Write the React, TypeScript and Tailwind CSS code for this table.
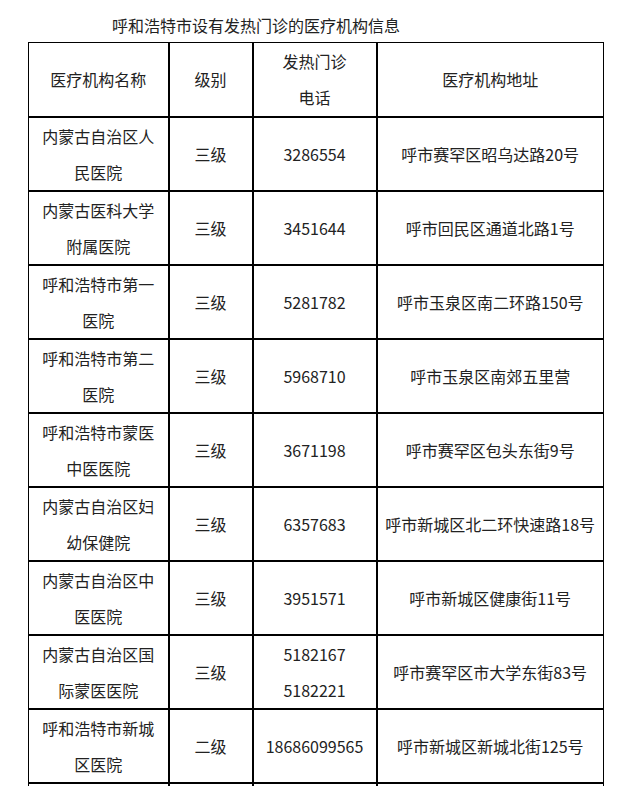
import React from "react";

interface Hospital {
  name: string[];
  level: string;
  phone: string[];
  address: string;
}

const hospitals: Hospital[] = [
  { name: ["内蒙古自治区人", "民医院"], level: "三级", phone: ["3286554"], address: "呼市赛罕区昭乌达路20号" },
  { name: ["内蒙古医科大学", "附属医院"], level: "三级", phone: ["3451644"], address: "呼市回民区通道北路1号" },
  { name: ["呼和浩特市第一", "医院"], level: "三级", phone: ["5281782"], address: "呼市玉泉区南二环路150号" },
  { name: ["呼和浩特市第二", "医院"], level: "三级", phone: ["5968710"], address: "呼市玉泉区南郊五里营" },
  { name: ["呼和浩特市蒙医", "中医医院"], level: "三级", phone: ["3671198"], address: "呼市赛罕区包头东街9号" },
  { name: ["内蒙古自治区妇", "幼保健院"], level: "三级", phone: ["6357683"], address: "呼市新城区北二环快速路18号" },
  { name: ["内蒙古自治区中", "医医院"], level: "三级", phone: ["3951571"], address: "呼市新城区健康街11号" },
  { name: ["内蒙古自治区国", "际蒙医医院"], level: "三级", phone: ["5182167", "5182221"], address: "呼市赛罕区市大学东街83号" },
  { name: ["呼和浩特市新城", "区医院"], level: "二级", phone: ["18686099565"], address: "呼市新城区新城北街125号" },
];

const cell = "border-2 border-black p-0 text-center align-middle";

function Lines({ items }: { items: string[] }) {
  return (
    <>
      {items.map((t, i) => (
        <div key={i}>{t}</div>
      ))}
    </>
  );
}

export default function App() {
  return (
    <div
      className="w-[620px] h-[786px] overflow-hidden bg-white text-[#222] text-[16px]"
      style={{ fontFamily: '"Noto Sans CJK SC", "Noto Sans", sans-serif' }}
    >
      <div className="h-[42px] pl-[112px] pt-[13px] leading-[24px]">
        呼和浩特市设有发热门诊的医疗机构信息
      </div>

      <table className="ml-[28px] w-[575px] table-fixed border-collapse leading-[36px]">
        <colgroup>
          <col className="w-[140px]" />
          <col className="w-[84px]" />
          <col className="w-[124px]" />
          <col className="w-[227px]" />
        </colgroup>
        <thead>
          <tr className="h-[74px]">
            <th className={`${cell} border-l border-t font-normal`}>医疗机构名称</th>
            <th className={`${cell} border-t font-normal`}>级别</th>
            <th className={`${cell} border-t font-normal`}>
              <Lines items={["发热门诊", "电话"]} />
            </th>
            <th className={`${cell} border-t border-r font-normal`}>医疗机构地址</th>
          </tr>
        </thead>
        <tbody>
          {hospitals.map((h, i) => (
            <tr key={i} className="h-[74px]">
              <td className={`${cell} border-l`}>
                <Lines items={h.name} />
              </td>
              <td className={cell}>{h.level}</td>
              <td className={cell}>
                <Lines items={h.phone} />
              </td>
              <td className={`${cell} border-r`}>{h.address}</td>
            </tr>
          ))}
          {/* next row is cut off by the bottom of the page */}
          <tr className="h-[74px]">
            <td className={`${cell} border-l`}>&nbsp;</td>
            <td className={cell}>&nbsp;</td>
            <td className={cell}>&nbsp;</td>
            <td className={`${cell} border-r`}>&nbsp;</td>
          </tr>
        </tbody>
      </table>
    </div>
  );
}
